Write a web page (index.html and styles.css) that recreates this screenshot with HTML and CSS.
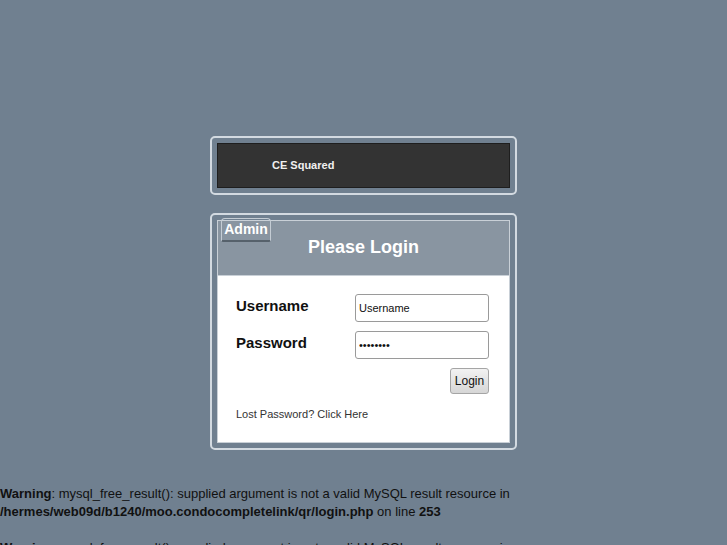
FILE: index.html
```html
<!DOCTYPE html>
<html lang="en">
<head>
  <meta charset="UTF-8">
  <title>CE Squared - Login</title>
  <link rel="stylesheet" href="styles.css">
</head>
<body>

  <div class="wrap">
    <!-- Banner -->
    <div class="frame">
      <div class="banner">CE Squared</div>
    </div>

    <!-- Login box -->
    <div class="frame">
      <div class="panel">
        <span class="tab">Admin</span>
        <div class="panel-head">Please Login</div>
        <form class="panel-body">
          <div class="row">
            <label for="user">Username</label>
            <input id="user" type="text" value="Username">
          </div>
          <div class="row">
            <label for="pass">Password</label>
            <input id="pass" type="password" value="password">
          </div>
          <div class="actions">
            <button type="button" class="btn">Login</button>
          </div>
          <a href="#" class="lost">Lost Password? Click Here</a>
        </form>
      </div>
    </div>
  </div>

  <div class="errors">
    <b>Warning</b>: mysql_free_result(): supplied argument is not a valid MySQL result resource in <b>/hermes/web09d/b1240/moo.condocompletelink/qr/login.php</b> on line <b>253</b><br>
    <br>
    <b>Warning</b>: mysql_free_result(): supplied argument is not a valid MySQL result resource in <b>/hermes/web09d/b1240/moo.condocompletelink/qr/login.php</b> on line <b>253</b>
  </div>

</body>
</html>
```

FILE: styles.css
```css
body {
  margin: 0;
  padding: 136px 0 0;
  background-color: #708090;
  font-family: 'Liberation Sans', Arial, sans-serif;
  color: #111;
}

.wrap {
  width: 307px;
  margin: 0 auto;
}

.frame {
  border: 2px solid #d3dae1;
  border-radius: 5px;
  padding: 5px;
  margin-bottom: 18px;
  box-sizing: border-box;
}

.banner {
  height: 45px;
  box-sizing: border-box;
  background-color: #333333;
  border: 1px solid #1e1e1e;
  color: #f0f0f0;
  font-size: 11px;
  font-weight: bold;
  line-height: 43px;
  padding-left: 54px;
}

.panel {
  position: relative;
  border: 1px solid #c9d0d7;
  background-color: #ffffff;
}

.tab {
  position: absolute;
  top: -3px;
  left: 3px;
  width: 50px;
  height: 24px;
  box-sizing: border-box;
  border: 1px solid #c4ccd4;
  border-bottom: 2px solid #56616b;
  border-radius: 4px 4px 2px 2px;
  color: #ffffff;
  font-size: 14px;
  font-weight: bold;
  line-height: 20px;
  text-align: center;
}

.panel-head {
  background-color: #8995a1;
  border-bottom: 1px solid #c9d0d7;
  height: 55px;
  box-sizing: border-box;
  color: #ffffff;
  font-size: 18px;
  font-weight: bold;
  text-align: center;
  padding-top: 16px;
}

.panel-body {
  margin: 0;
  padding: 18px 20px 22px 18px;
}

.row {
  display: flex;
  justify-content: space-between;
  margin-bottom: 9px;
}

.row label {
  font-size: 15px;
  font-weight: bold;
  padding-top: 3px;
}

.row input {
  width: 134px;
  height: 28px;
  box-sizing: border-box;
  border: 1px solid #9a9a9a;
  border-radius: 3px;
  padding: 2px 3px;
  font-family: 'Liberation Sans', Arial, sans-serif;
  font-size: 11px;
  color: #111;
  background: #fff;
}

.actions {
  display: flex;
  justify-content: flex-end;
  margin-top: 2px;
}

.btn {
  width: 39px;
  height: 26px;
  padding: 0;
  border: 1px solid #a5a5a5;
  border-radius: 3px;
  background: linear-gradient(#f2f2f2, #d6d6d6);
  font-family: 'Liberation Sans', Arial, sans-serif;
  font-size: 12px;
  color: #111;
}

.lost {
  display: block;
  margin-top: 14px;
  font-size: 11px;
  color: #333;
  text-decoration: none;
}

.errors {
  margin-top: 35px;
  font-size: 13px;
  line-height: 18px;
  color: #111;
}
```
